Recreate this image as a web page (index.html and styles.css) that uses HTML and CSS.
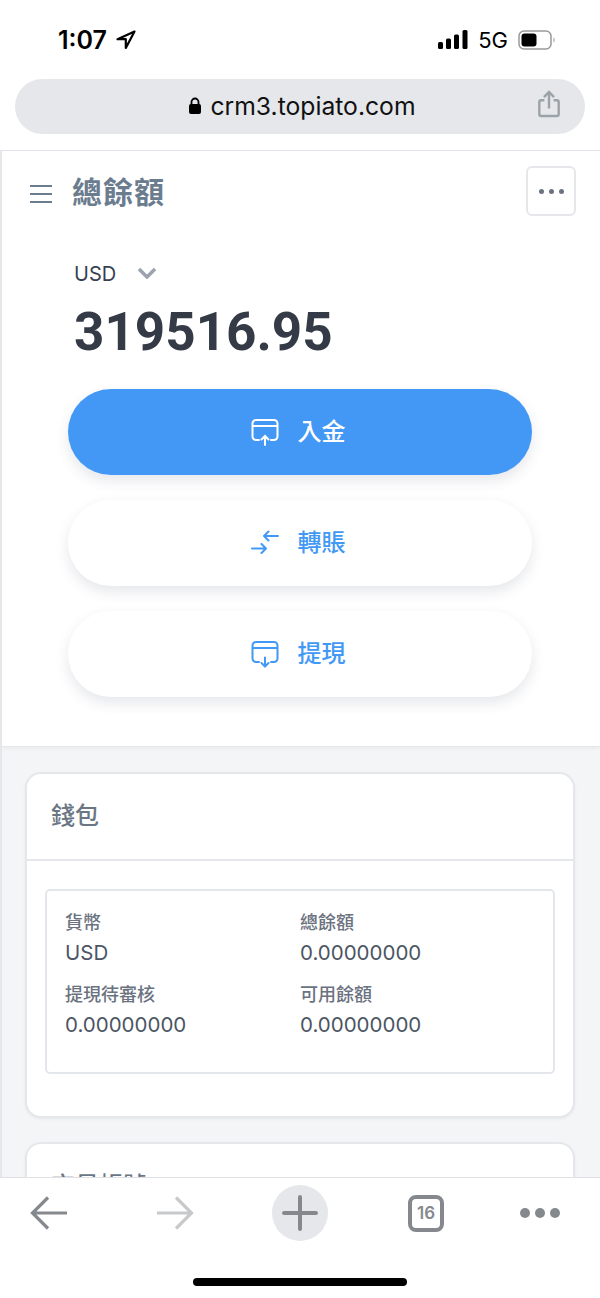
FILE: index.html
```html
<!DOCTYPE html>
<html lang="zh-Hant">
<head>
  <meta charset="UTF-8">
  <title>總餘額</title>
  <meta name="viewport" content="width=device-width, initial-scale=1.0">
  <link rel="stylesheet" href="styles.css">
</head>
<body>
  <div class="status-bar">
    <div class="status-left">
      <span class="time">1:07</span>
      <svg class="loc-icon" width="20" height="20" viewBox="0 0 20 20"><path d="M18.5 1.5 1.5 9.2h8.3v8.8z" fill="none" stroke="#000" stroke-width="2.2" stroke-linejoin="round"/></svg>
    </div>
    <div class="status-right">
      <svg width="30" height="19" viewBox="0 0 30 19"><rect x="0" y="12" width="5" height="7" rx="1.5"/><rect x="8" y="8.5" width="5" height="10.5" rx="1.5"/><rect x="16" y="4.500" width="5" height="14.500" rx="1.500"/><rect x="24.500" y="0" width="5" height="19" rx="1.500"/></svg>
      <span class="net">5G</span>
      <svg width="38" height="20" viewBox="0 0 38 20"><rect x="1" y="1" width="32" height="18" rx="5" fill="none" stroke="#999" stroke-width="1.500"/><rect x="3.500" y="3.500" width="15" height="13" rx="3"/><path d="M35.500 7.500c1.500.6 1.500 4.400 0 5z" fill="#999"/></svg>
    </div>
  </div>

  <div class="url-wrap">
    <div class="url-bar">
      <svg class="lock" width="14" height="18" viewBox="0 0 14 18"><path d="M3.500 8V5a3.500 3.500 0 0 1 7 0v3" fill="none" stroke="#000" stroke-width="1.800"/><rect x="1" y="7" width="12" height="10" rx="2"/></svg>
      <span>crm3.topiato.com</span>
      <svg class="share" width="24" height="30" viewBox="0 0 26 30" fill="none" stroke="#9ca3a8" stroke-width="2.600"><path d="M8 11H4.500a2 2 0 0 0-2 2v13a2 2 0 0 0 2 2h17a2 2 0 0 0 2-2V13a2 2 0 0 0-2-2H18"/><path d="M13 20V2M7.500 7.500 13 2l5.500 5.500"/></svg>
    </div>
  </div>

  <div class="page">
    <div class="balance-panel">
      <div class="top-row">
        <div class="title-wrap">
          <svg width="22" height="20" viewBox="0 0 22 20" stroke="#6b7c8f" stroke-width="2"><path d="M0 2h22M0 10h22M0 18h22"/></svg>
          <h1>總餘額</h1>
        </div>
        <div class="more-btn"><i></i><i></i><i></i></div>
      </div>

      <div class="currency">
        <span>USD</span>
        <svg width="20" height="12" viewBox="0 0 20 12" fill="none" stroke="#9ca3af" stroke-width="3.500"><path d="M2 2l8 8 8-8"/></svg>
      </div>
      <div class="amount">319516.95</div>

      <div class="actions">
        <a class="action primary">
          <svg width="28" height="28" viewBox="0 0 28 28" fill="none" stroke="currentColor" stroke-width="2" stroke-linecap="round"><path d="M8 22H5a3.500 3.500 0 0 1-3.500-3.500v-13A3.500 3.500 0 0 1 5 2h18a3.500 3.500 0 0 1 3.500 3.500v13A3.500 3.500 0 0 1 23 22h-3M1.500 8h25M14 27V18M10.500 21.500 14 18l3.500 3.500"/></svg>
          <span>入金</span>
        </a>
        <a class="action">
          <svg width="28" height="28" viewBox="0 0 28 28" fill="none" stroke="currentColor" stroke-width="2" stroke-linecap="round" stroke-linejoin="round"><path d="M27 7H13M17.500 2.500 13 7l4.500 4.500M1 19.500h14M10.500 15l4.500 4.500-4.500 4.500"/></svg>
          <span>轉賬</span>
        </a>
        <a class="action">
          <svg width="28" height="28" viewBox="0 0 28 28" fill="none" stroke="currentColor" stroke-width="2" stroke-linecap="round"><path d="M8 22H5a3.500 3.500 0 0 1-3.500-3.500v-13A3.500 3.500 0 0 1 5 2h18a3.500 3.500 0 0 1 3.500 3.500v13A3.500 3.500 0 0 1 23 22h-3M1.500 8h25M14 17.500V26.500M10.500 23 14 26.500l3.500-3.500"/></svg>
          <span>提現</span>
        </a>
      </div>
    </div>

    <div class="cards">
      <div class="card">
        <div class="card-head">錢包</div>
        <div class="card-body">
          <div class="wallet">
            <div class="cell"><label>貨幣</label><p>USD</p></div>
            <div class="cell"><label>總餘額</label><p>0.00000000</p></div>
            <div class="cell"><label>提現待審核</label><p>0.00000000</p></div>
            <div class="cell"><label>可用餘額</label><p>0.00000000</p></div>
          </div>
        </div>
      </div>
      <div class="card">
        <div class="card-head">交易帳號</div>
      </div>
    </div>
  </div>

  <div class="toolbar">
    <div class="tool-row">
      <svg width="38" height="34" viewBox="0 0 38 34" fill="none" stroke="#85898d" stroke-width="3.200"><path d="M37 17H3M18 1.500 2.500 17 18 32.500"/></svg>
      <svg class="tool-forward" width="38" height="34" viewBox="0 0 38 34" fill="none" stroke="#c8c9cb" stroke-width="3.200"><path d="M1 17h34M20 1.500 35.500 17 20 32.500"/></svg>
      <div class="new-tab">
        <svg width="36" height="36" viewBox="0 0 36 36" stroke="#85898d" stroke-width="4" stroke-linecap="round"><path d="M18 2v32M2 18h32"/></svg>
      </div>
      <div class="tabs-count">16</div>
      <div class="tool-dots"><i></i><i></i><i></i></div>
    </div>
    <div class="home-bar"></div>
  </div>
</body>
</html>
```

FILE: styles.css
```css
* {
  box-sizing: border-box;
}
html, body {
  margin: 0;
  padding: 0;
}
body {
  width: 600px;
  height: 1298px;
  overflow: hidden;
  display: flex;
  flex-direction: column;
  background: #fff;
  font-family: Inter, "Noto Sans CJK TC", sans-serif;
}

/* phone + browser chrome */
.status-bar {
  height: 79px;
  flex: none;
  display: flex;
  justify-content: space-between;
  align-items: center;
  padding: 0 44px 0 58px;
}
.status-left, .status-right {
  display: flex;
  align-items: center;
}
.time {
  font-size: 25px;
  font-weight: 600;
  color: #000;
}
.loc-icon {
  margin-left: 9px;
}
.net {
  font-size: 22px;
  color: #000;
  margin: 0 10px 0 10px;
}
.url-wrap {
  height: 71px;
  flex: none;
  padding: 0 15px;
}
.url-bar {
  position: relative;
  height: 55px;
  padding: 0 0 2px 4px;
  border-radius: 28px;
  background: #e6e7eb;
  display: flex;
  align-items: center;
  justify-content: center;
  font-size: 24.7px;
  color: #111;
}
.lock {
  margin-right: 8px;
}
.share {
  position: absolute;
  right: 24px;
  top: 10px;
}

/* page */
.page {
  flex: 1;
  min-height: 0;
  overflow: hidden;
  background: #f4f5f7;
  border-top: 1px solid #e2e4e9;
  border-left: 2px solid #e5e7eb;
}
.balance-panel {
  height: 596px;
  background: #fff;
  border-bottom: 1px solid #e5e7eb;
  box-shadow: 0 1px 4px rgba(0,0,0,0.06);
  padding: 15px 24px 0 28px;
}
.top-row {
  display: flex;
  justify-content: space-between;
  align-items: center;
}
.title-wrap {
  display: flex;
  align-items: center;
  gap: 20px;
  margin-top: 6px;
}
h1 {
  margin: 0 0 5px;
  font-size: 30px;
  line-height: 36px;
  font-weight: 700;
  color: #6b7c8f;
  letter-spacing: 1px;
}
.more-btn {
  width: 50px;
  height: 50px;
  border: 2px solid #e5e7eb;
  border-radius: 6px;
  display: flex;
  align-items: center;
  justify-content: center;
  gap: 5px;
}
.more-btn i {
  width: 5px;
  height: 5px;
  border-radius: 50%;
  background: #6b7280;
}
.currency {
  display: flex;
  align-items: center;
  gap: 21px;
  margin: 43px 0 0 44px;
  font-size: 20px;
  line-height: 30px;
  color: #374151;
}
.currency svg {
  margin-top: -3px;
}
.amount {
  margin: 11px 0 0 44px;
  font-family: Roboto, sans-serif;
  font-size: 53px;
  font-weight: 700;
  line-height: 64px;
  color: #343a46;
}
.actions {
  margin: 25px 44px 0 38px;
  display: flex;
  flex-direction: column;
  gap: 25px;
  width: 464px;
}
.action {
  height: 86px;
  border-radius: 43px;
  background: #fff;
  color: #4299f5;
  display: flex;
  align-items: center;
  justify-content: center;
  gap: 19px;
  padding-right: 4px;
  font-size: 24px;
  font-weight: 500;
  box-shadow: 0 6px 14px rgba(50,60,90,0.12);
}
.action span {
  margin-bottom: 6px;
}
.action.primary {
  background: #4398f5;
  color: #fff;
}

.cards {
  padding: 25px 25px 0 23px;
  display: flex;
  flex-direction: column;
  gap: 24px;
}
.card {
  background: #fff;
  border: 2px solid #e5e7eb;
  border-radius: 16px;
  box-shadow: 0 1px 3px rgba(0,0,0,0.06);
}
.card-head {
  height: 87px;
  padding: 0 24px 7px;
  display: flex;
  align-items: center;
  border-bottom: 2px solid #e5e7eb;
  font-size: 24px;
  font-weight: 500;
  color: #6b7684;
}
.card-body {
  padding: 28px 18px 42px;
}
.wallet {
  height: 185px;
  padding: 18px 18px 0;
  border: 2px solid #e3e6ea;
  border-radius: 5px;
  display: grid;
  grid-template-columns: 235px 1fr;
  grid-auto-rows: 72px;
}
.cell label {
  display: block;
  font-size: 18px;
  line-height: 28px;
  font-weight: 500;
  color: #6b7280;
}
.cell p {
  margin: 0;
  font-size: 20.5px;
  line-height: 32px;
  color: #4b5563;
}

/* bottom toolbar */
.toolbar {
  height: 121px;
  flex: none;
  background: #fff;
  border-top: 1px solid #dfe1e5;
  display: flex;
  flex-direction: column;
  align-items: center;
}
.tool-row {
  width: 100%;
  height: 70px;
  padding: 0 0 0 30px;
  display: flex;
  align-items: center;
}
.tool-forward {
  margin-left: 88px;
}
.new-tab {
  width: 56px;
  height: 56px;
  margin-left: 78px;
  border-radius: 50%;
  background: #e6e7eb;
  display: flex;
  align-items: center;
  justify-content: center;
}
.tabs-count {
  width: 36px;
  height: 37px;
  margin-left: 80px;
  border: 4px solid #85898d;
  border-radius: 8px;
  display: flex;
  align-items: center;
  justify-content: center;
  font-size: 17px;
  font-weight: 600;
  color: #85898d;
}
.tool-dots {
  display: flex;
  gap: 5px;
  margin-left: 76px;
}
.tool-dots i {
  width: 10px;
  height: 10px;
  border-radius: 50%;
  background: #85898d;
}
.home-bar {
  width: 214px;
  height: 8px;
  margin-top: 30px;
  border-radius: 4px;
  background: #000;
}
```
